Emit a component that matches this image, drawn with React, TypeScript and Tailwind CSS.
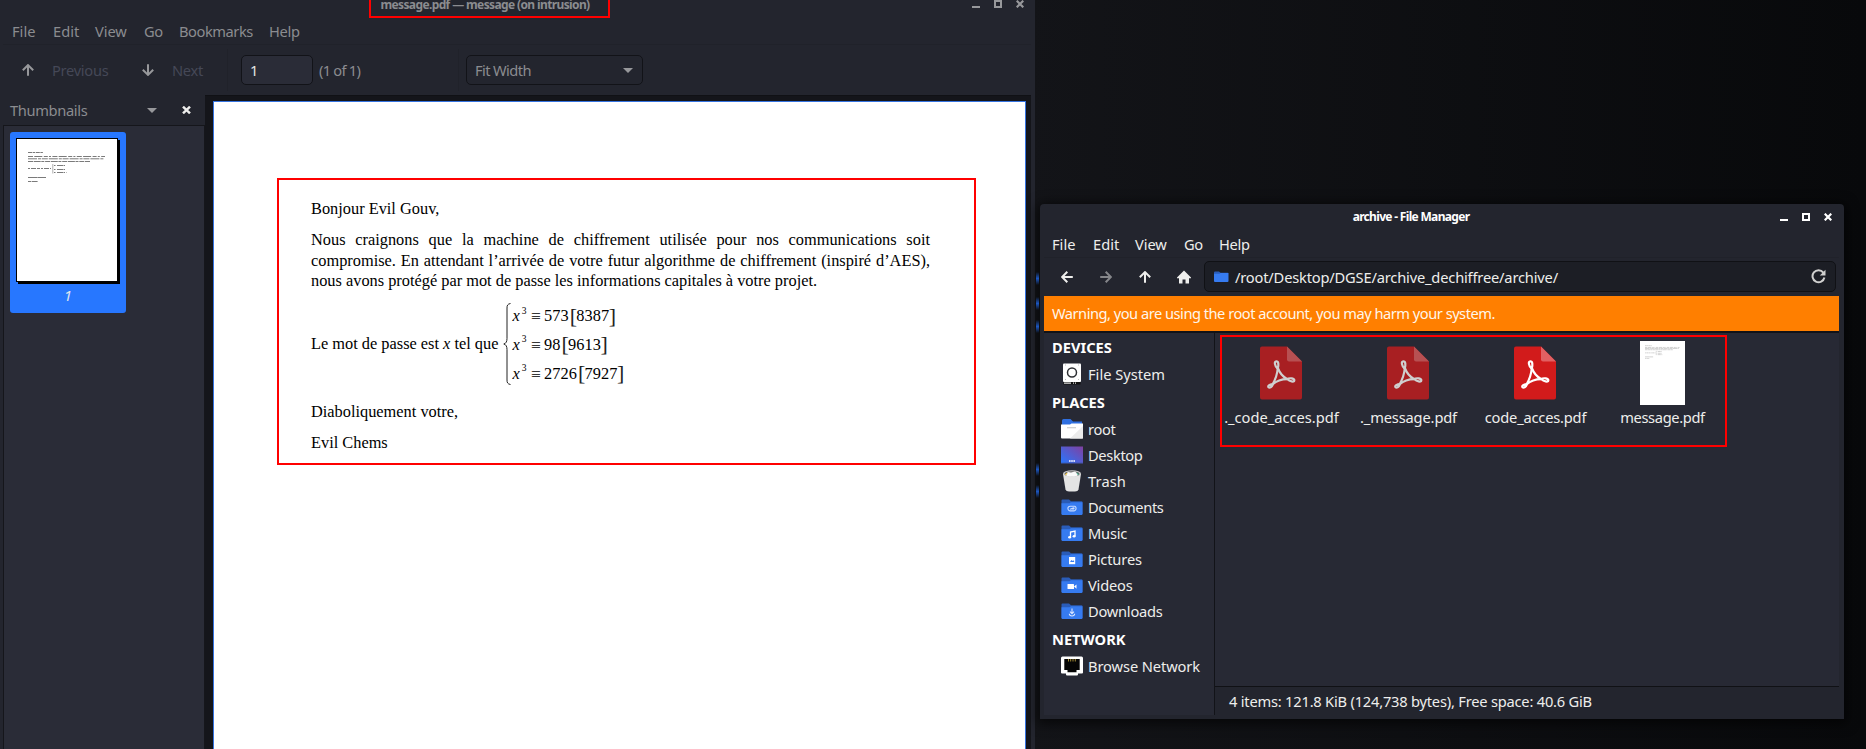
import React from "react";

const UI = "font-['Noto_Sans',sans-serif]";

function WindowButtons({ color }: { color: string }) {
  return (
    <div className={`flex gap-[14px] ${color}`}>
      <svg width="8" height="8" viewBox="0 0 8 8"><rect x="0" y="6" width="8" height="2" fill="currentColor" /></svg>
      <svg width="8" height="8" viewBox="0 0 8 8"><rect x="1" y="1" width="6" height="6" fill="none" stroke="currentColor" strokeWidth="2" /></svg>
      <svg width="8" height="8" viewBox="0 0 8 8"><path d="M0.7 0.7L7.3 7.3M7.3 0.7L0.7 7.3" stroke="currentColor" strokeWidth="2.2" /></svg>
    </div>
  );
}

function Arrow({ turn = "", color }: { turn?: string; color: string }) {
  return (
    <svg width="12" height="12" viewBox="0 0 12 12" className={`${turn} ${color}`}>
      <path d="M6 11.8V1.5M0.8 6.3L6 1.1L11.2 6.3" fill="none" stroke="currentColor" strokeWidth="2" />
    </svg>
  );
}

function Equation({ value, mod }: { value: string; mod: string }) {
  return (
    <div className="flex h-[28.6px] items-center whitespace-nowrap leading-[20px]">
      <i>x</i>
      <span className="relative -top-[5.5px] ml-[2px] text-[9.5px]">3</span>
      <span className="ml-[4.500px] w-[13px] text-[17.500px]">≡</span>
      <span className="tracking-[0.1px]">{value}</span>
      <span className="relative -top-[0.5px] ml-[1px] font-light text-[#222] text-[22px]">[</span>
      <span className="-ml-[1px] tracking-[0.1px]">{mod}</span>
      <span className="relative -top-[0.5px] -ml-[0.500px] font-light text-[#222] text-[22px]">]</span>
    </div>
  );
}

function Letter() {
  return (
    <div className="flex w-[619px] flex-col font-['Liberation_Serif',serif] text-[16.350px] leading-[20px] text-black">
      <p>Bonjour Evil Gouv,</p>
      <div className="mt-[11.3px] [text-align-last:justify]">
        <p className="h-[20.4px]">Nous craignons que la machine de chiffrement utilisée pour nos communications soit</p>
        <p className="h-[20.4px]">compromise. En attendant l’arrivée de votre futur algorithme de chiffrement (inspiré d’AES),</p>
      </div>
      <p className="h-[20.4px]">nous avons protégé par mot de passe les informations capitales à votre projet.</p>
      <div className="mt-[10px] flex h-[86px] items-center">
        <p className="w-[192px] whitespace-nowrap">Le mot de passe est <i>x</i> tel que</p>
        <svg width="8" height="82" viewBox="0 0 8 82" className="mr-[1.500px]">
          <path d="M7.5 0.5C4.5 1 4 2.5 4 5V35.500C4 38.5 3 40.500 0.800 41C3 41.500 4 43.500 4 46.500V77C4 79.500 4.500 81 7.500 81.500" fill="none" stroke="#222" strokeWidth="1" />
        </svg>
        <div className="pt-[1px]">
          <Equation value="573" mod="8387" />
          <Equation value="98" mod="9613" />
          <Equation value="2726" mod="7927" />
        </div>
      </div>
      <p className="mt-[14.500px]">Diaboliquement votre,</p>
      <p className="mt-[11px]">Evil Chems</p>
    </div>
  );
}

/** Letter rendered as thin dashes for page previews. */
function MiniLetter({ width, opacity }: { width: number; opacity: number }) {
  const s = { stroke: "#222", strokeWidth: 1, opacity };
  return (
    <svg width={width} viewBox="0 0 78 33" fill="none">
      <g {...s}>
        <path d="M0 1.500h15" strokeDasharray="4 .6 2.500 .7" />
        <path d="M0 5.500h77" strokeDasharray="5 1.300 8 1.500 4 1.200 2 1.400" />
        <path d="M0 7.800h76" strokeDasharray="9 1 3 .8 6 1" />
        <path d="M0 10.500h62" strokeDasharray="5 .7 7 .6 3 .8" />
        <path d="M0 17.500h23" strokeDasharray="2 1 5 1 3 1" />
        <path d="M26 14.500h12M26 18.500h11M26 21.500h13" strokeDasharray="1.500 1.500 6 .5" />
        <path d="M24.800 13v9.500" strokeWidth=".6" />
        <path d="M0 26.500h18" strokeDasharray="9 .3" />
        <path d="M0 30.500h10" strokeDasharray="3 .6 6 .5" />
      </g>
    </svg>
  );
}

function PdfViewer() {
  return (
    <section className="flex h-[749px] w-[1035px] shrink-0 flex-col bg-[#23252e] text-[#8b8c90]">
      <header className="relative flex h-[18px]">
        <div className="w-[970px] whitespace-nowrap text-center text-[12px] font-bold leading-[9px] tracking-[-0.62px]">message.pdf — message (on intrusion)</div>
        <div className="absolute left-[972px] top-0"><WindowButtons color="text-[#97989b]" /></div>
        <div className="absolute -top-[4px] left-[369px] h-[22px] w-[241px] border-2 border-[#ff0000]" />
      </header>
      <nav className="ml-[3px] mr-[4px] flex h-[27px] items-center border-b border-[#20222a] pb-[1px] pl-[9px]">
        <span className="w-[41px]">File</span>
        <span className="w-[42px]">Edit</span>
        <span className="w-[49px] tracking-[-0.1px]">View</span>
        <span className="w-[35px] tracking-[-0.3px]">Go</span>
        <span className="w-[90px] tracking-[-0.45px]">Bookmarks</span>
        <span className="tracking-[-0.3px]">Help</span>
      </nav>
      <div className="flex h-[50px] items-center">
        <div className="flex w-[227px] items-center pl-[22px] text-[#454857]">
          <Arrow color="text-[#97989b]" />
          <span className="ml-[18px] w-[90px] pb-[1px] tracking-[-0.3px]">Previous</span>
          <Arrow turn="rotate-180" color="text-[#97989b]" />
          <span className="ml-[18px] pb-[1px] tracking-[-0.3px]">Next</span>
        </div>
        <div className="h-[42px] w-px bg-[#20222a]" />
        <div className="ml-[13px] flex h-[30px] w-[72px] items-center rounded-[5px] border border-[#121318] bg-[#2a2c37] pb-[1px] pl-[8px] text-[#e4e4e4]">1</div>
        <span className="ml-[6px] w-[139px] pb-[1px] tracking-[-0.75px]">(1 of 1)</span>
        <div className="h-[42px] w-px bg-[#20222a]" />
        <div className="ml-[7px] flex h-[30px] w-[177px] items-center justify-between rounded-[5px] border border-[#121318] pl-[8px] pr-[9px]">
          <span className="pb-[1px] tracking-[-0.6px]">Fit Width</span>
          <svg width="10" height="5" viewBox="0 0 10 5"><path d="M0 0H10L5 5Z" fill="#97989b" /></svg>
        </div>
      </div>
      <div className="flex flex-1 pl-[3px]">
        <aside className="flex w-[202px] flex-col">
          <div className="flex h-[30px] items-center pl-[7px]">
            <span className="w-[137px] pb-[1px] tracking-[-0.35px]">Thumbnails</span>
            <svg width="10" height="5" viewBox="0 0 10 5"><path d="M0 0H10L5 5Z" fill="#97989b" /></svg>
            <svg width="9" height="8" viewBox="0 0 9 8" className="ml-[25px]"><path d="M1 0.700L8 7.300M8 0.700L1 7.300" stroke="#eeeeec" strokeWidth="2.500" /></svg>
          </div>
          <div className="flex-1 border border-b-0 border-[#15161b] bg-[#2a2c37] pl-[6px] pt-[6px]">
            <div className="flex h-[181px] w-[116px] flex-col items-center rounded-[3px] bg-[#2777ff] pr-[2px] pt-[6px]">
              <div className="h-[144px] w-[102px] border border-black bg-white pl-[11px] pt-[12px] shadow-[2px_2px_0_#000]">
                <MiniLetter width={78} opacity={0.6} />
              </div>
              <i className="ml-[2px] mt-[3px] text-[15px] text-[#dfe4ee]">1</i>
            </div>
          </div>
        </aside>
        <main className="w-[826px] border-t border-[#101115] bg-[#14151a] pl-[8px] pt-[5px]">
          <div className="relative h-[648px] w-[813px] border border-b-0 border-[#3573e0] bg-white pl-[97px] pt-[97px]">
            <Letter />
            <div className="absolute left-[63px] top-[76px] h-[287px] w-[699px] border-2 border-[#ff0000]" />
          </div>
        </main>
      </div>
    </section>
  );
}

function Folder({ children }: { children?: React.ReactNode }) {
  return (
    <svg width="22" height="20" viewBox="0 0 22 20">
      <path d="M0.500 3.500a1 1 0 0 1 1-1H8L10 4.300H20.500a1 1 0 0 1 1 1V17H0.500Z" fill="#2a5cb8" />
      <path d="M0.500 6.300H8.500L10 5.300H21.500V17a1 1 0 0 1-1 1H1.500a1 1 0 0 1-1-1Z" fill="#367bf0" />
      {children}
    </svg>
  );
}

const icons: Record<string, React.ReactNode> = {
  "File System": (
    <svg width="22" height="22" viewBox="0 0 22 22">
      <rect x="2" y="0.500" width="18" height="18.500" rx="1" fill="#fff" />
      <rect x="2.500" y="19" width="17" height="2.500" fill="#111" />
      <path d="M3 20.200h7M12 20.200h1M14 20.200h1" stroke="#ddd" strokeWidth="1.200" />
      <circle cx="11" cy="9.500" r="4.500" fill="none" stroke="#2d2f33" strokeWidth="1.500" />
      <path d="M4 2h1M17 2h1M4 16.500h1M17 16.500h1" stroke="#bbb" />
    </svg>
  ),
  root: (
    <svg width="22" height="22" viewBox="0 0 22 22">
      <path d="M1 2.500a1.500 1.500 0 0 1 1.500-1.500H9.500L12 3.500H21V8H1Z" fill="#2f6fe0" />
      <path d="M0 6.500H9L10.500 5.500H22V19.500a1 1 0 0 1-1 1H1a1 1 0 0 1-1-1Z" fill="#fff" />
      <path d="M22 8V20.500H9Z" fill="#ececec" />
      <path d="M6 9.700h9" stroke="#cfcfcf" strokeWidth="1.200" />
    </svg>
  ),
  Desktop: (
    <svg width="22" height="20" viewBox="0 0 22 20">
      <defs><linearGradient id="desk" x1="0" y1="1" x2="1" y2="0"><stop stopColor="#2777ff" /><stop offset="1" stopColor="#8140a0" /></linearGradient></defs>
      <rect y="1.500" width="22" height="17" fill="url(#desk)" />
      <rect y="17.800" width="22" height="1" fill="#384070" />
      <path d="M8 16h6" stroke="#fff" strokeWidth="1.500" strokeDasharray="1.600 .6" />
    </svg>
  ),
  Trash: (
    <svg width="22" height="22" viewBox="0 0 22 22">
      <path d="M2 4L4.500 19.500Q5 21.500 8 21.500H14Q17 21.500 17.500 19.500L20 4Z" fill="#e4e4e4" />
      <ellipse cx="11" cy="3.500" rx="9" ry="3.300" fill="#ccc" />
      <ellipse cx="11" cy="3.900" rx="7.500" ry="2.700" fill="#5f5f5f" />
      <path d="M4 4.500L7 2L10 2.500L14 1.500L17.500 4.500Q16 6.800 11 6.800T4 4.500Z" fill="#fafafa" />
      <path d="M4.500 5l1.500-2" stroke="#e8bd39" strokeWidth="1.200" /><path d="M16 2.800l1.500 2" stroke="#4fa58b" strokeWidth="1.200" />
    </svg>
  ),
  Documents: (
    <Folder><g fill="none" stroke="#c9dcff" strokeWidth="1.100"><path d="M13.500 9.300H9.200a2.300 2.300 0 0 0 0 4.600H12.800a2.200 2.200 0 0 0 2.200-2.300a1.900 1.900 0 0 0-1.500-2.300" /><path d="M9 12.200l3.500-1.400q1 .2.300 1.200H10.500" /></g></Folder>
  ),
  Music: (
    <Folder><path d="M9.500 14V9L14 8V13" fill="none" stroke="#fff" strokeWidth="1.300" /><ellipse cx="8.600" cy="14.300" rx="1.500" ry="1.200" fill="#fff" /><ellipse cx="13.100" cy="13.300" rx="1.500" ry="1.200" fill="#fff" /></Folder>
  ),
  Pictures: (
    <Folder><rect x="8" y="8" width="6.200" height="7.200" fill="#fff" /><path d="M9 13l1.500-2 1.200 1 1-.8L13.300 13Z" fill="#367bf0" /></Folder>
  ),
  Videos: (
    <Folder><rect x="6.500" y="9" width="6.500" height="5" rx=".6" fill="#fff" /><path d="M13 11.500L15.500 9.500V13.800Z" fill="#fff" /></Folder>
  ),
  Downloads: (
    <Folder><path d="M11 7.500V12.500M9 10.700L11 12.700L13 10.700M8.300 12.800Q8.500 15 11 15T13.700 12.800" fill="none" stroke="#d9e6ff" strokeWidth="1.100" /></Folder>
  ),
  "Browse Network": (
    <svg width="22" height="20" viewBox="0 0 22 20">
      <path d="M1.500 .5H20.500a1.500 1.500 0 0 1 1.500 1.500V16.500a1 1 0 0 1-1 1H17V18.500a1 1 0 0 1-1 1H6a1 1 0 0 1-1-1V17.500H1a1 1 0 0 1-1-1V2A1.500 1.500 0 0 1 1.500 .5Z" fill="#fff" />
      <path d="M3.300 3H18.700V14H15.500V16.300H6.500V14H3.300Z" fill="#050505" />
      <path d="M7.500 3v2.500M9.700 3v2.500M12 3v2.500M14.300 3v2.500" stroke="#b59a3c" strokeWidth=".9" />
    </svg>
  ),
};

const places: [string, string][] = [
  ["root", "tracking-[-0.3px]"],
  ["Desktop", "tracking-[-0.35px]"],
  ["Trash", "tracking-[0.1px]"],
  ["Documents", "tracking-[-0.4px]"],
  ["Music", "tracking-[-0.2px]"],
  ["Pictures", "tracking-[-0.15px]"],
  ["Videos", "tracking-[-0.2px]"],
  ["Downloads", "tracking-[-0.25px]"],
];

function Place({ name, tracking }: { name: string; tracking: string }) {
  return (
    <div className="flex h-[26px] shrink-0 items-center pl-[17px]">
      {icons[name]}
      <span className={`ml-[5px] whitespace-nowrap ${tracking}`}>{name}</span>
    </div>
  );
}

function Heading({ children }: { children: React.ReactNode }) {
  return <h2 className="flex h-[28px] shrink-0 items-center pl-[8px] text-[14.670px] font-bold text-white">{children}</h2>;
}

function PdfIcon({ dim }: { dim?: boolean }) {
  return (
    <svg width="42" height="54" viewBox="0 0 42 54">
      <path d="M2 0.500H27L42 15.500V51.500a2 2 0 0 1-2 2H2a2 2 0 0 1-2-2V2.500a2 2 0 0 1 2-2Z" fill={dim ? "#a81f22" : "#d21b1b"} />
      <path d="M27 0.500L42 15.500H29a2 2 0 0 1-2-2Z" fill={dim ? "#b75052" : "#e16062"} />
      <g fill="none" stroke={dim ? "#cfcfcf" : "#ffffff"} strokeWidth="2.200" strokeLinejoin="round">
        <path d="M17.800 22C19.500 26.500 22.500 30.500 27.300 33.200" />
        <path d="M17.800 22C17.300 28 15.500 33.500 12.500 38.500" />
        <path d="M12.500 38.500C17 34.500 22 33.200 27.300 33.200" />
        <path d="M17.500 22.500C14.500 19.500 14 15.500 16.300 15.300C18.800 15.300 18.700 19 17.800 22.500" />
        <path d="M27 33C30 31.500 34.500 32.500 34.300 34.500C34 36.500 30 35.500 27 33" />
        <path d="M13 38C10 38 7.500 39.800 8.500 41.200C9.800 42.500 12 40.700 13 38" />
      </g>
    </svg>
  );
}

const files: [string, string][] = [
  ["._code_acces.pdf", ""],
  ["._message.pdf", "tracking-[-0.15px]"],
  ["code_acces.pdf", "tracking-[-0.2px]"],
  ["message.pdf", "tracking-[-0.35px]"],
];

function FileManager() {
  return (
    <section className="flex h-[515px] w-[804px] flex-col rounded-t-[4px] bg-[#23252e] pb-[4px] pl-[4px] pr-[5px] text-[#eeeeec] shadow-[0_2px_12px_3px_rgba(0,0,0,0.6)]">
      <header className="flex h-[26px] items-center">
        <div className="w-[734px] text-center text-[12px] font-bold tracking-[-0.68px] text-white">archive - File Manager</div>
        <div className="ml-[2px]"><WindowButtons color="text-white" /></div>
      </header>
      <nav className="flex h-[28px] items-center border-b border-[#20222a] pl-[8px]">
        <span className="w-[41px]">File</span>
        <span className="w-[42px]">Edit</span>
        <span className="w-[49px] tracking-[-0.1px]">View</span>
        <span className="w-[35px] tracking-[-0.3px]">Go</span>
        <span className="tracking-[-0.3px]">Help</span>
      </nav>
      <div className="flex h-[38px] items-center pb-px">
        <div className="flex w-[160px] shrink-0 items-center gap-[27px] pl-[17px]">
          <Arrow turn="-rotate-90" color="text-[#eeeeec]" />
          <Arrow turn="rotate-90" color="text-[#85868a]" />
          <Arrow color="text-[#eeeeec]" />
          <svg width="14" height="14" viewBox="0 0 14 14" className="-ml-[1px]"><path d="M7 .5L0 7.500V8.300H2V13.500H5.500V9.500H8.500V13.500H12V8.300H14V7.500Z" fill="#eeeeec" /></svg>
        </div>
        <div className="flex h-[31px] w-[632px] items-center rounded-[5px] border border-[#101115] bg-[#1c1e25] pl-[9px] pr-[9px]">
          <svg width="15" height="12" viewBox="0 0 15 12"><path d="M0 1.500Q0 .5 1 .5H5L6.500 1.700H14V5H0Z" fill="#2a5cb8" /><path d="M0 2.700H5.500L6.500 2H14.500V10a1 1 0 0 1-1 1H1a1 1 0 0 1-1-1Z" fill="#367bf0" /></svg>
          <span className="ml-[6px] flex-1 tracking-[-0.18px]">/root/Desktop/DGSE/archive_dechiffree/archive/</span>
          <svg width="15" height="15" viewBox="0 0 15 15"><path d="M12.300 3.600A6 6 0 1 0 13.400 8.500" fill="none" stroke="#d0d0cf" strokeWidth="2" /><path d="M14.500 .8V6.500H8.800Z" fill="#d0d0cf" /></svg>
        </div>
      </div>
      <div className="flex h-[35px] shrink-0 items-center bg-[#ff7f00] pb-[1px] pl-[8px] tracking-[-0.5px] text-[#fff6ea]">Warning, you are using the root account, you may harm your system.</div>
      <div className="flex flex-1 border-t-2 border-[#121318] bg-[#272934]">
        <aside className="flex w-[171px] flex-col border-r border-[#121318]">
          <Heading>DEVICES</Heading>
          <Place name="File System" tracking="" />
          <div className="pt-[1px]">
            <Heading>PLACES</Heading>
            {places.map(([n, t]) => <Place key={n} name={n} tracking={t} />)}
          </div>
          <div className="pt-[1px]">
            <Heading>NETWORK</Heading>
            <Place name="Browse Network" tracking="tracking-[-0.1px]" />
          </div>
        </aside>
        <div className="flex flex-1 flex-col">
          <div className="relative flex h-[353px] pl-[3px]">
            {files.map(([f, t], i) => (
              <div key={f} className="flex w-[127px] flex-col items-center">
                <div className="flex h-[74px] items-center pt-[6px]">
                  {i < 3 ? <div className="pr-[2px]"><PdfIcon dim={i < 2} /></div> : (
                    <div className="h-[64px] w-[45px] bg-white pl-[5px] pt-[4px]"><MiniLetter width={35} opacity={0.45} /></div>
                  )}
                </div>
                <span className={`whitespace-nowrap leading-[20px] ${t}`}>{f}</span>
              </div>
            ))}
            <div className="absolute left-[5px] top-[2px] h-[112px] w-[507px] border-2 border-[#ff0000]" />
          </div>
          <footer className="flex flex-1 items-center border-t border-[#101115] bg-[#23252e] pb-px pl-[14px] tracking-[-0.21px]">
            4 items: 121.8 KiB (124,738 bytes), Free space: 40.6 GiB
          </footer>
        </div>
      </div>
    </section>
  );
}

export default function App() {
  return (
    <div className={`flex h-[749px] w-[1866px] overflow-hidden bg-linear-to-r from-[#131418] from-55% to-[#08090b] ${UI} text-[14.670px] leading-[20px]`}>
      <PdfViewer />
      <div className="relative w-[5px] shrink-0">
        {["top-[272px]", "top-[297px]", "top-[320px]", "top-[463px]", "top-[485px]"].map((t) => (
          <div key={t} className={`absolute left-px h-[13px] w-[3px] bg-linear-to-b from-transparent via-[#1c55bd] to-transparent ${t}`} />
        ))}
      </div>
      <div className="pt-[204px]">
        <FileManager />
      </div>
    </div>
  );
}
